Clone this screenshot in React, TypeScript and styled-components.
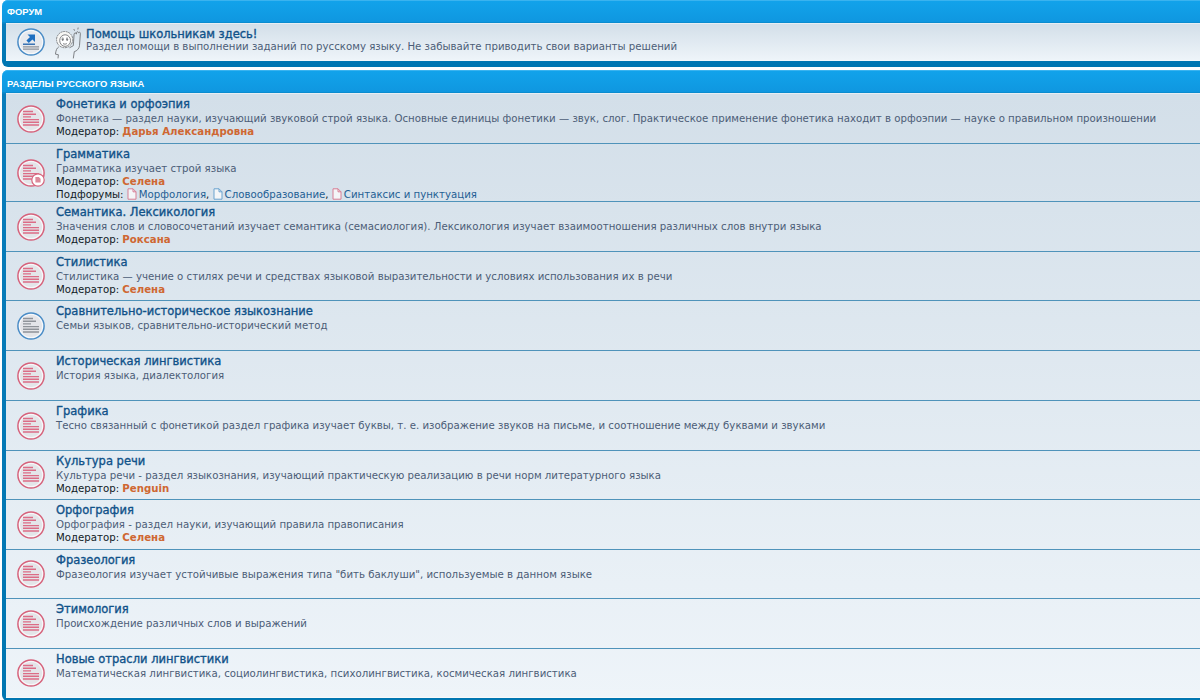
import React from 'react';
import styled, { createGlobalStyle } from 'styled-components';

const GlobalStyle = createGlobalStyle`
  html, body {
    margin: 0;
    padding: 0;
    background: #ffffff;
    overflow: hidden;
  }
  body {
    font-family: 'DejaVu Sans', Verdana, sans-serif;
  }
`;

const Page = styled.div`
  width: 1200px;
  height: 700px;
  overflow: hidden;
  padding-left: 2px;
  box-sizing: border-box;
`;

const Panel = styled.section`
  margin-bottom: 3px;
  padding-left: 4px;
  border-radius: 6px 0 0 6px;
  background: linear-gradient(to bottom, #12a3eb 0, #0f97e0 22px, #0a7dbb 24px, #0076b1 100%);
`;

const PanelHead = styled.h2<{ $top: number }>`
  margin: 0 0 0 -4px;
  height: 23px;
  box-sizing: border-box;
  padding: ${p => p.$top}px 0 0 5px;
  border-top: 1px solid #3ab3ef;
  border-bottom: 1px solid #0b8ccf;
  border-top-left-radius: 6px;
  font-family: 'Liberation Sans', Arial, sans-serif;
  font-size: 9.4px;
  line-height: 13px;
  font-weight: 700;
  color: #ffffff;
  text-transform: uppercase;
`;

const List = styled.ul<{ $tail: number }>`
  margin: 0;
  padding: 0 0 ${p => p.$tail}px;
  list-style: none;
`;

const Rows = styled.div`
  background: linear-gradient(to bottom, #d3dfe9 0%, #eef4f9 100%);
  border-top: 1px solid #e8eef3;
  border-bottom: 1px solid #f6f9fb;
`;

const Row = styled.li<{ $h: number; $last?: boolean }>`
  height: ${p => p.$h}px;
  box-sizing: border-box;
  display: flex;
  align-items: flex-start;
  border-bottom: ${p => (p.$last ? '0' : '1px solid #4f93ba')};
`;

const IconCell = styled.div<{ $w: number }>`
  width: ${p => p.$w}px;
  flex: none;
  align-self: center;
  display: flex;
  align-items: center;
  padding-left: 11px;
  gap: 10px;
  box-sizing: border-box;
`;

const Body = styled.div<{ $top?: number }>`
  min-width: 0;
  padding-top: ${p => p.$top ?? 3}px;
  white-space: nowrap;
`;

const Title = styled.a<{ $lh?: number }>`
  display: block;
  font-size: 11.5px;
  line-height: ${p => p.$lh ?? 15}px;
  color: #105289;
  -webkit-text-stroke: 0.35px #105289;
`;

const Desc = styled.div`
  font-size: 10.2px;
  line-height: 13px;
  color: #4c5d77;
`;

const Meta = styled.div`
  font-size: 10.2px;
  line-height: 13px;
  color: #111a24;
`;

const ModName = styled.b`
  color: #cf6732;
`;

const SubLink = styled.span`
  color: #1f5f94;
`;

const Glyph = styled.svg`
  vertical-align: -2px;
  margin-right: 2px;
`;

const red = '#d6637c';
const blue = '#4a8cc6';

function ForumIcon({ color, sub }: { color: string; sub?: boolean }) {
  return (
    <svg width="28" height="28" viewBox="0 0 28 28">
      <circle cx="14" cy="14" r="13.1" fill="#f7f8fa" stroke={color} strokeWidth="1.5" />
      <circle cx="14" cy="14" r="11" fill="#e4e5e9" />
      <g stroke={color === red ? '#dc6c86' : '#8f9399'} strokeWidth="1.4">
        <path d="M6 6.5h10M6 9.2h13M6 11.9h8M6 14.6h16M6 17.3h16M6 20h16" />
      </g>
      {sub && (
        <g>
          <circle cx="21" cy="21" r="6.2" fill="#fff" stroke={color} strokeWidth="1.2" />
          <path d="M18.4 18h3.4l1.8 1.8v3.8h-5.2z" fill="#dc8a9b" />
        </g>
      )}
    </svg>
  );
}

function LinkIcon() {
  return (
    <svg width="28" height="28" viewBox="0 0 28 28">
      <circle cx="14" cy="14" r="13.1" fill="#f7f8fa" stroke={blue} strokeWidth="1.5" />
      <circle cx="14" cy="14" r="11" fill="#e6e9ee" />
      <path d="M10.5 6.5h7.5v7.5l-2.6-2.6-3.6 3.6-2.4-2.4 3.6-3.6z" fill="#1f6fc0" />
      <path d="M6 16.2h12" stroke="#1f5fa8" strokeWidth="1.3" />
      <path d="M6 18.8h16M6 21.2h16" stroke="#8f9399" strokeWidth="1.3" />
    </svg>
  );
}

function Mascot() {
  return (
    <svg width="27" height="33" viewBox="0 0 28 33" fill="none" stroke="#6f7174" strokeWidth="0.9">
      <circle cx="10" cy="13.5" r="8.4" fill="#f6f6f4" strokeDasharray="2 .7" />
      <ellipse cx="10.5" cy="14.5" rx="5.6" ry="6" fill="#fff" />
      <path d="M7 12.2c.7-.5 1.5-.5 2 0M11.5 12.2c.7-.5 1.5-.5 2 0" />
      <circle cx="8" cy="13.6" r="0.7" fill="#666" />
      <circle cx="12.6" cy="13.6" r="0.7" fill="#666" />
      <path d="M8.3 17.6c1.2.8 2.9.8 4 0" />
      <path d="M4 21c-2.2 1.2-3.2 4-3.5 7.6l3 .6-.4 3.8M15 22l4-2.2.8-12c.2-1.6 2.2-1.6 2.4 0v-1.6c.4-1.2 2-1.2 2.2.2l.6-.4c.9-.3 1.4.3 1.3 1.2l-.9 12.6c-.2 3-2.8 5.6-5.4 6.2L19 33" />
      <path d="M19.5 2.5l.8 1.8M24 1l-.3 2" />
    </svg>
  );
}

function PageGlyph({ color }: { color: string }) {
  return (
    <Glyph width="10" height="12" viewBox="0 0 10 12" fill="#f4f6f8" stroke={color} strokeWidth="1">
      <path d="M1 .8h5l3 3v7.4H1z" />
      <path d="M6 .8v3h3" fill="none" />
    </Glyph>
  );
}

type Forum = {
  h: number;
  title: string;
  desc: string;
  mod?: string;
  color?: string;
  sub?: boolean;
};

const forums: Forum[] = [
  {
    h: 50,
    title: 'Фонетика и орфоэпия',
    desc: 'Фонетика — раздел науки, изучающий звуковой строй языка. Основные единицы фонетики — звук, слог. Практическое применение фонетика находит в орфоэпии — науке о правильном произношении',
    mod: 'Дарья Александровна',
  },
  {
    h: 58,
    title: 'Грамматика',
    desc: 'Грамматика изучает строй языка',
    mod: 'Селена',
    sub: true,
  },
  {
    h: 50,
    title: 'Семантика. Лексикология',
    desc: 'Значения слов и словосочетаний изучает семантика (семасиология). Лексикология изучает взаимоотношения различных слов внутри языка',
    mod: 'Роксана',
  },
  {
    h: 49,
    title: 'Стилистика',
    desc: 'Стилистика — учение о стилях речи и средствах языковой выразительности и условиях использования их в речи',
    mod: 'Селена',
  },
  {
    h: 50,
    title: 'Сравнительно-историческое языкознание',
    desc: 'Семьи языков, сравнительно-исторический метод',
    color: blue,
  },
  { h: 50, title: 'Историческая лингвистика', desc: 'История языка, диалектология' },
  {
    h: 50,
    title: 'Графика',
    desc: 'Тесно связанный с фонетикой раздел графика изучает буквы, т. е. изображение звуков на письме, и соотношение между буквами и звуками',
  },
  {
    h: 49,
    title: 'Культура речи',
    desc: 'Культура речи - раздел языкознания, изучающий практическую реализацию в речи норм литературного языка',
    mod: 'Penguin',
  },
  {
    h: 50,
    title: 'Орфография',
    desc: 'Орфография - раздел науки, изучающий правила правописания',
    mod: 'Селена',
  },
  {
    h: 49,
    title: 'Фразеология',
    desc: 'Фразеология изучает устойчивые выражения типа "бить баклуши", используемые в данном языке',
  },
  { h: 50, title: 'Этимология', desc: 'Происхождение различных слов и выражений' },
  {
    h: 48,
    title: 'Новые отрасли лингвистики',
    desc: 'Математическая лингвистика, социолингвистика, психолингвистика, космическая лингвистика',
  },
];

export default function App() {
  return (
    <Page>
      <GlobalStyle />
      <Panel>
        <PanelHead $top={4}>Форум</PanelHead>
        <List $tail={6}>
          <Rows>
            <Row $h={36} $last>
              <IconCell $w={80}>
                <LinkIcon />
                <Mascot />
              </IconCell>
              <Body $top={4}>
                <Title $lh={12}>Помощь школьникам здесь!</Title>
                <Desc>Раздел помощи в выполнении заданий по русскому языку. Не забывайте приводить свои варианты решений</Desc>
              </Body>
            </Row>
          </Rows>
        </List>
      </Panel>
      <Panel>
        <PanelHead $top={6}>Разделы русского языка</PanelHead>
        <List $tail={3}>
          <Rows>
            {forums.map((f, i) => (
              <Row key={f.title} $h={f.h} $last={i === forums.length - 1}>
                <IconCell $w={50}>
                  <ForumIcon color={f.color || red} sub={f.sub} />
                </IconCell>
                <Body>
                  <Title>{f.title}</Title>
                  <Desc>{f.desc}</Desc>
                  {f.mod && (
                    <Meta>
                      Модератор: <ModName>{f.mod}</ModName>
                    </Meta>
                  )}
                  {f.sub && (
                    <Meta>
                      Подфорумы:{' '}
                      <SubLink>
                        <PageGlyph color="#d77e94" />
                        Морфология
                      </SubLink>
                      ,{' '}
                      <SubLink>
                        <PageGlyph color="#6aa3cf" />
                        Словообразование
                      </SubLink>
                      ,{' '}
                      <SubLink>
                        <PageGlyph color="#d77e94" />
                        Синтаксис и пунктуация
                      </SubLink>
                    </Meta>
                  )}
                </Body>
              </Row>
            ))}
          </Rows>
        </List>
      </Panel>
    </Page>
  );
}
